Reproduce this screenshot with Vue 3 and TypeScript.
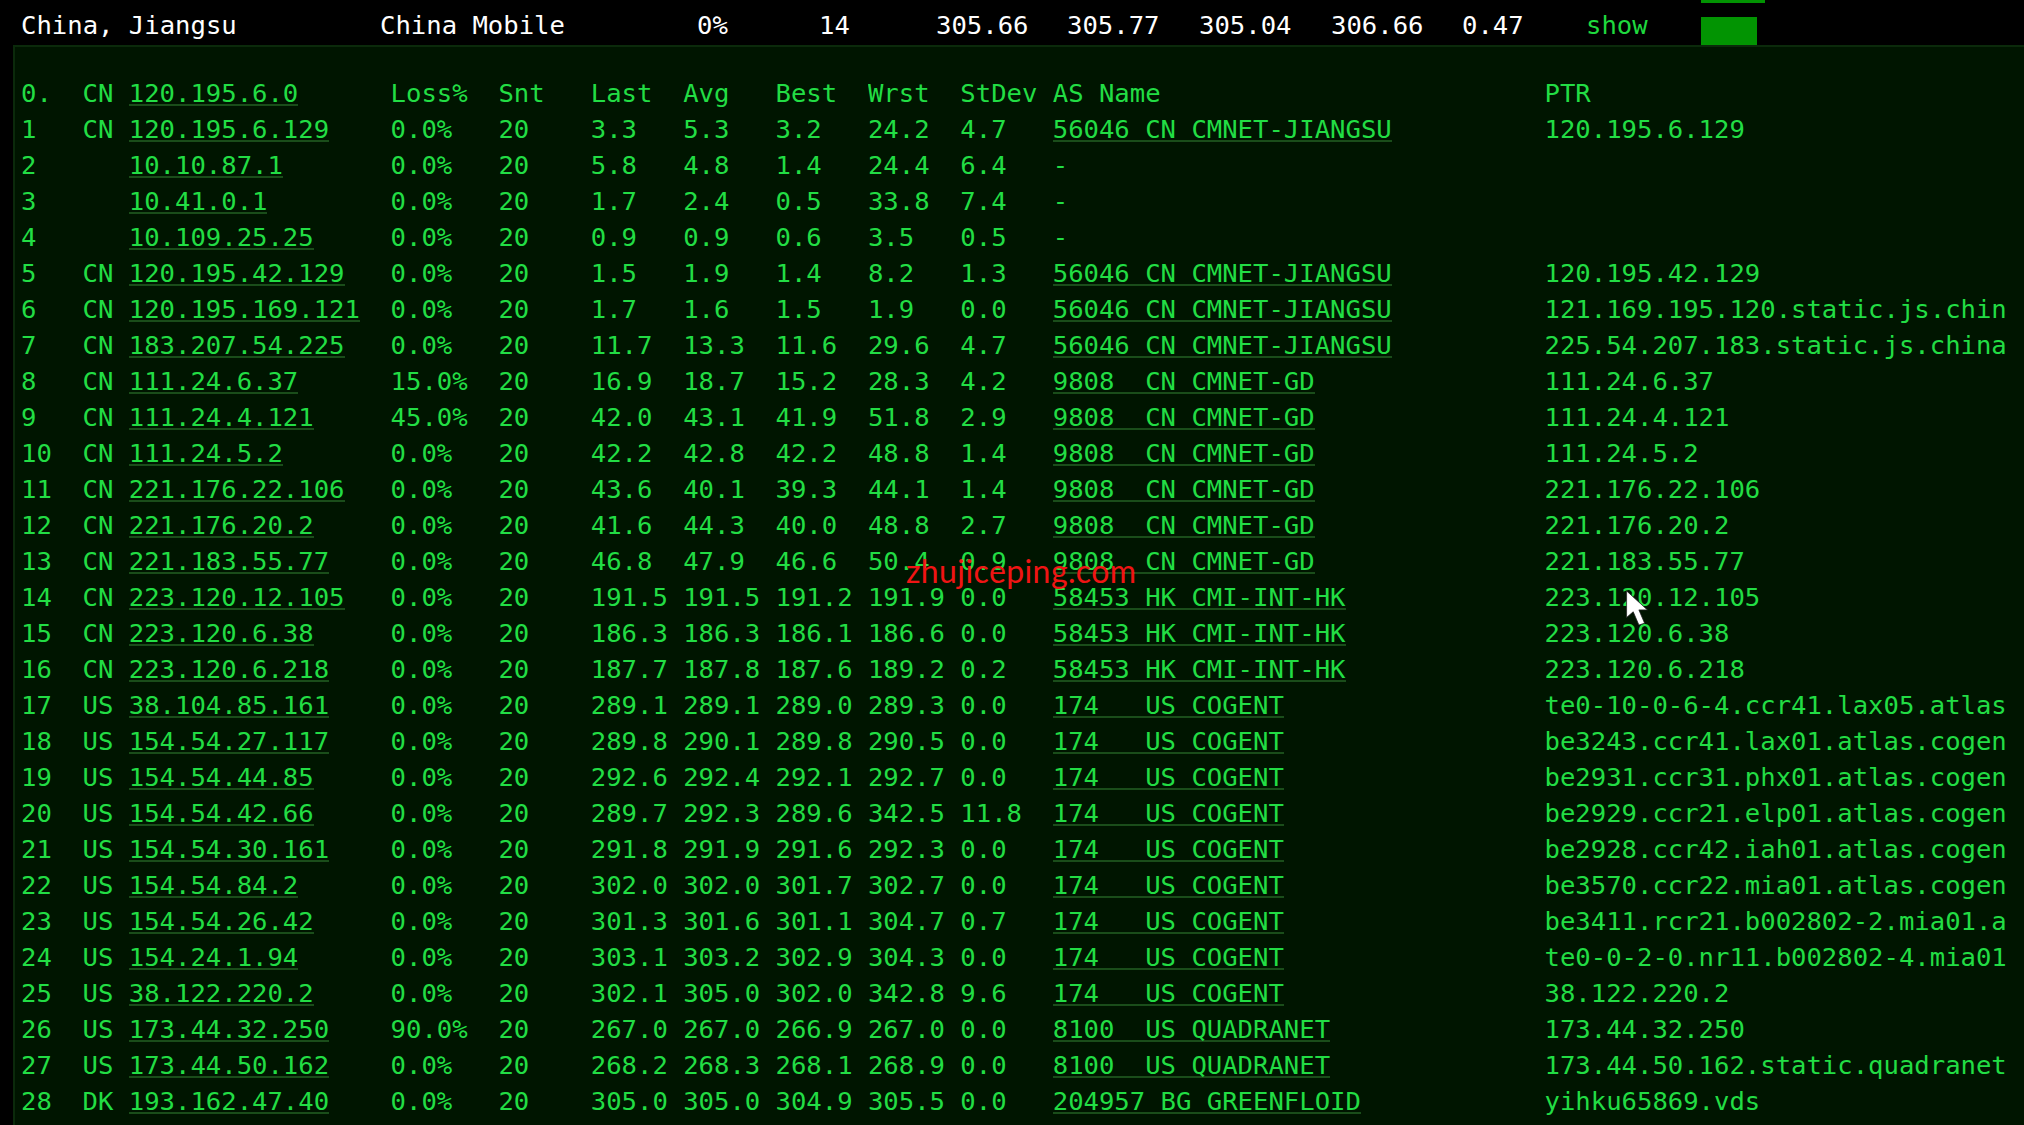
<script setup lang="ts">
type Hop = {
  n: string; cc: string; ip: string; loss: string; last: string; avg: string;
  best: string; wrst: string; dev: string; as: string; ptr: string;
}
const raw = `1|CN|120.195.6.129|0.0%|3.3|5.3|3.2|24.2|4.7|56046 CN CMNET-JIANGSU|120.195.6.129
2||10.10.87.1|0.0%|5.8|4.8|1.4|24.4|6.4|-|
3||10.41.0.1|0.0%|1.7|2.4|0.5|33.8|7.4|-|
4||10.109.25.25|0.0%|0.9|0.9|0.6|3.5|0.5|-|
5|CN|120.195.42.129|0.0%|1.5|1.9|1.4|8.2|1.3|56046 CN CMNET-JIANGSU|120.195.42.129
6|CN|120.195.169.121|0.0%|1.7|1.6|1.5|1.9|0.0|56046 CN CMNET-JIANGSU|121.169.195.120.static.js.chin
7|CN|183.207.54.225|0.0%|11.7|13.3|11.6|29.6|4.7|56046 CN CMNET-JIANGSU|225.54.207.183.static.js.china
8|CN|111.24.6.37|15.0%|16.9|18.7|15.2|28.3|4.2|9808  CN CMNET-GD|111.24.6.37
9|CN|111.24.4.121|45.0%|42.0|43.1|41.9|51.8|2.9|9808  CN CMNET-GD|111.24.4.121
10|CN|111.24.5.2|0.0%|42.2|42.8|42.2|48.8|1.4|9808  CN CMNET-GD|111.24.5.2
11|CN|221.176.22.106|0.0%|43.6|40.1|39.3|44.1|1.4|9808  CN CMNET-GD|221.176.22.106
12|CN|221.176.20.2|0.0%|41.6|44.3|40.0|48.8|2.7|9808  CN CMNET-GD|221.176.20.2
13|CN|221.183.55.77|0.0%|46.8|47.9|46.6|50.4|0.9|9808  CN CMNET-GD|221.183.55.77
14|CN|223.120.12.105|0.0%|191.5|191.5|191.2|191.9|0.0|58453 HK CMI-INT-HK|223.120.12.105
15|CN|223.120.6.38|0.0%|186.3|186.3|186.1|186.6|0.0|58453 HK CMI-INT-HK|223.120.6.38
16|CN|223.120.6.218|0.0%|187.7|187.8|187.6|189.2|0.2|58453 HK CMI-INT-HK|223.120.6.218
17|US|38.104.85.161|0.0%|289.1|289.1|289.0|289.3|0.0|174   US COGENT|te0-10-0-6-4.ccr41.lax05.atlas
18|US|154.54.27.117|0.0%|289.8|290.1|289.8|290.5|0.0|174   US COGENT|be3243.ccr41.lax01.atlas.cogen
19|US|154.54.44.85|0.0%|292.6|292.4|292.1|292.7|0.0|174   US COGENT|be2931.ccr31.phx01.atlas.cogen
20|US|154.54.42.66|0.0%|289.7|292.3|289.6|342.5|11.8|174   US COGENT|be2929.ccr21.elp01.atlas.cogen
21|US|154.54.30.161|0.0%|291.8|291.9|291.6|292.3|0.0|174   US COGENT|be2928.ccr42.iah01.atlas.cogen
22|US|154.54.84.2|0.0%|302.0|302.0|301.7|302.7|0.0|174   US COGENT|be3570.ccr22.mia01.atlas.cogen
23|US|154.54.26.42|0.0%|301.3|301.6|301.1|304.7|0.7|174   US COGENT|be3411.rcr21.b002802-2.mia01.a
24|US|154.24.1.94|0.0%|303.1|303.2|302.9|304.3|0.0|174   US COGENT|te0-0-2-0.nr11.b002802-4.mia01
25|US|38.122.220.2|0.0%|302.1|305.0|302.0|342.8|9.6|174   US COGENT|38.122.220.2
26|US|173.44.32.250|90.0%|267.0|267.0|266.9|267.0|0.0|8100  US QUADRANET|173.44.32.250
27|US|173.44.50.162|0.0%|268.2|268.3|268.1|268.9|0.0|8100  US QUADRANET|173.44.50.162.static.quadranet
28|DK|193.162.47.40|0.0%|305.0|305.0|304.9|305.5|0.0|204957 BG GREENFLOID|yihku65869.vds`
const hops: Hop[] = raw.split('\n').map((l) => {
  const [n, cc, ip, loss, last, avg, best, wrst, dev, as, ptr] = l.split('|')
  return { n, cc, ip, loss, last, avg, best, wrst, dev, as, ptr }
})
const summary = ['China, Jiangsu', 'China Mobile', '0%', '14', '305.66', '305.77', '305.04', '306.66', '0.47']
</script>

<template>
  <main class="page">
    <header class="summary">
      <span v-for="(s, i) in summary" :key="i">{{ s }}</span>
      <a class="show">show</a>
      <div class="bars"><i class="bar-top"></i><i class="bar-main"></i></div>
    </header>
    <section class="panel">
      <div class="row">
        <span>0.</span><span>CN</span><span><a>120.195.6.0</a></span>
        <span>Loss%</span><span>Snt</span><span>Last</span><span>Avg</span><span>Best</span><span>Wrst</span><span>StDev</span>
        <span>AS Name</span><span>PTR</span>
      </div>
      <div v-for="h in hops" :key="h.n" class="row">
        <span>{{ h.n }}</span><span>{{ h.cc }}</span><span><a>{{ h.ip }}</a></span>
        <span>{{ h.loss }}</span><span>20</span><span>{{ h.last }}</span><span>{{ h.avg }}</span><span>{{ h.best }}</span><span>{{ h.wrst }}</span><span>{{ h.dev }}</span>
        <span><a v-if="h.as !== '-'">{{ h.as }}</a><template v-else>-</template></span>
        <span>{{ h.ptr }}</span>
      </div>
      <div class="mark">zhujiceping.com</div>
      <svg class="cursor" viewBox="0 0 24 38" width="24" height="36">
        <path d="M1 1 L1 29 L8 23 L14 37 L20 35 L14 21 L23 21 Z" fill="#fff" stroke="#222" stroke-width="0.8" />
      </svg>
    </section>
  </main>
</template>

<style>
html, body { margin: 0; background: #000; }
</style>

<style scoped>
.page {
  width: 2024px;
  height: 1125px;
  overflow: hidden;
  background: #000;
  font-family: "DejaVu Sans Mono", monospace;
  font-size: 25.6px;
  white-space: pre;
}
.summary {
  height: 45px;
  display: grid;
  grid-template-columns: 359px 317px 122px 117px 131px 132px 132px 131px 124px 115px 1fr;
  grid-template-rows: 45px;
  padding-left: 21px;
  color: #fff;
  line-height: 50px;
}
.show { color: #1fd83e; }
.bars {
  position: relative;
  height: 45px;
}
.bar-top, .bar-main { position: absolute; left: 0; top: 0; background: #029402; }
.bar-top { width: 64px; height: 3px; }
.bar-main { top: 17px; width: 56px; height: 28px; }
.panel {
  position: relative;
  margin-left: 13px;
  padding: 28px 0 0 6px;
  height: 1080px;
  background: #001500;
  border-top: 2px solid #0b2a0b;
  border-left: 2px solid #0b2a0b;
  color: #22dd44;
}
.row {
  display: grid;
  grid-template-columns: 61.6px 46.2px 261.8px 107.8px 92.4px 92.4px 92.4px 92.4px 92.4px 92.4px 491.8px 462px;
  height: 36px;
  line-height: 36px;
  overflow: hidden;
  width: 1986px;
}
.row > span { overflow: hidden; height: 36px; }
.row a { display: inline-block; height: 29px; border-bottom: 2px solid #1a4d1a; }
.mark {
  position: absolute;
  left: 891px;
  top: 504px;
  color: #f01414;
  font-family: "Lato", sans-serif;
  font-size: 32px;
  line-height: 40px;
  letter-spacing: 0.4px;
}
.cursor { position: absolute; left: 1610px; top: 543px; }
</style>
